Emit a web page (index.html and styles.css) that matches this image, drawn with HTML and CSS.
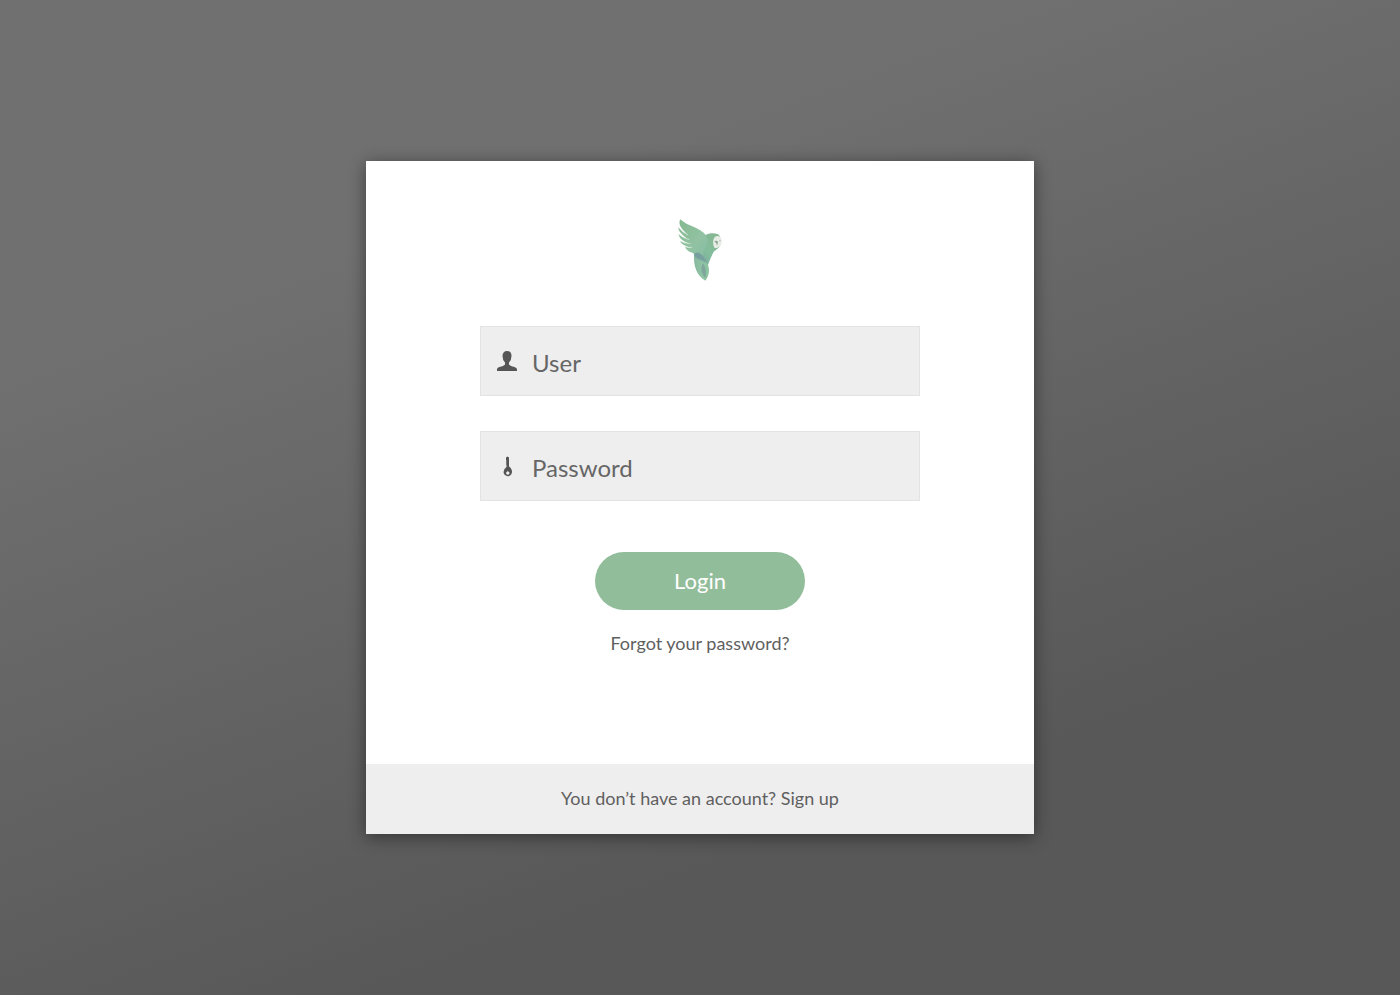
FILE: index.html
```html
<!DOCTYPE html>
<html lang="en">
<head>
<meta charset="utf-8">
<title>Login</title>
<link rel="stylesheet" href="styles.css">
</head>
<body class="page">
<main class="card">
  <form class="form">
    <svg class="logo" viewBox="24 22 132 186" aria-hidden="true">
      <defs>
        <linearGradient id="wing" x1="0" y1="0" x2="1" y2="1">
          <stop offset="0" stop-color="#84b98f"/>
          <stop offset=".6" stop-color="#92c2a2"/>
          <stop offset="1" stop-color="#86bda5"/>
        </linearGradient>
        <linearGradient id="body" x1="1" y1="0" x2="0" y2="1">
          <stop offset="0" stop-color="#86b68f"/>
          <stop offset=".55" stop-color="#84bd9d"/>
          <stop offset="1" stop-color="#769f9f"/>
        </linearGradient>
        <linearGradient id="tail" x1="0" y1="0" x2="1" y2="0">
          <stop offset="0" stop-color="#86b79d"/>
          <stop offset=".5" stop-color="#8fc3a3"/>
          <stop offset="1" stop-color="#8bc4a0"/>
        </linearGradient>
      </defs>
      <path fill="url(#tail)" d="M72 128C70 163 80 192 106 207C120 190 120 168 110 150C98 144 83 140 72 128Z"/>
      <path fill="#76949a" opacity=".6" d="M99 155C90 170 93 184 106 199C110 182 108 166 99 155Z"/>
      <path fill="url(#body)" d="M90 84C102 66 126 60 144 68C155 76 157 100 144 110L131 120C124 134 118 148 114 160C108 148 80 150 71 128C72 108 80 94 90 84Z"/>
      <path fill="url(#wing)" d="M31 23C47 39 69 43 85 53C101 62 110 70 113 84C112 104 100 112 99 134C90 120 82 120 76 126C60 122 49 116 45 105Q54 108 62 107C47 104 34 98 30 88Q42 94 55 95C39 88 27 80 26 68Q40 79 53 82C36 70 25 59 25 47Q37 62 52 68C34 53 23 37 31 23Z"/>
      <path fill="none" stroke="#dfeee4" stroke-width="2" d="M26 47Q37 63 54 70M26 68Q39 80 58 84M30 88Q44 96 62 96M45 105Q56 109 66 107"/>
      <path fill="#759a9f" opacity=".75" d="M76 124C90 120 102 134 110 152C100 142 84 142 74 132Z"/>
      <path fill="#e7ece5" d="M135 75C145 70 154 76 155 86C157 99 147 111 134 109C128 100 127 85 135 75Z"/>
      <path fill="#8aa690" d="M133 90C136 86 143 87 144 92L141 102L139 94Z"/>
      <circle cx="150" cy="87" r="2" fill="#a3b4a3"/>
    </svg>
    <label class="field">
      <svg class="field-icon" viewBox="0 0 20 20" aria-hidden="true">
        <path fill="#555" d="M10 0C13 0 14.500 2 14.500 5Q14.500 9 12 11.500V13.500C14 16 20 15.500 20 18.500V20H0V18.500C0 15.500 6 16 8 13.500V11.500Q5.500 9 5.500 5C5.500 2 7 0 10 0Z"/>
      </svg>
      <input class="input" type="text" placeholder="User" aria-label="User">
    </label>
    <label class="field">
      <svg class="field-icon" viewBox="0 0 20 20" aria-hidden="true">
        <path fill="#555" fill-rule="evenodd" d="M9 1.500L10.500 0.500L12 1.500V10.500Q15 12.500 15 16Q14.500 20 11 20.200Q7 20 6.500 16Q7 12.500 9.500 11V9L9 8L9.500 7L9 6L9.500 5L9 4ZM10.800 15L9.200 16.500A1.700 1.700 0 1 0 12.400 16.500Z"/>
      </svg>
      <input class="input" type="password" placeholder="Password" aria-label="Password">
    </label>
    <button class="login" type="submit">Login</button>
    <a class="link" href="#">Forgot your password?</a>
  </form>
  <footer class="footer"><a class="link" href="#">You don’t have an account? Sign up</a></footer>
</main>
</body>
</html>
```
FILE: styles.css
```css
* {
  box-sizing: border-box;
}

.page {
  display: flex;
  align-items: center;
  justify-content: center;
  min-height: 100vh;
  margin: 0;
  background: linear-gradient(160deg, #707070 25%, #585858 75%);
  color: #5f5f5f;
  font-family: Lato, "Liberation Sans", sans-serif;
  font-size: 18px;
  line-height: 24px;
}

.card {
  width: 100%;
  max-width: 668px;
  background: #fff;
  box-shadow: 0 3px 16px rgba(0, 0, 0, 0.45);
}

.form {
  display: flex;
  flex-direction: column;
  align-items: center;
  padding: 58px 24px 109px;
}

.logo {
  width: 44px;
  height: 62px;
  margin-bottom: 45px;
}

.field {
  display: flex;
  align-items: center;
  gap: 15px;
  width: 100%;
  max-width: 440px;
  height: 70px;
  margin-bottom: 35px;
  padding: 0 16px;
  border: 1px solid #e3e3e3;
  background: #eee;
}

.field-icon {
  flex: none;
  width: 20px;
  height: 20px;
  overflow: visible;
}

.input {
  flex: 1;
  min-width: 0;
  height: 100%;
  padding: 2px 0 0;
  border: 0;
  outline: 0;
  background: transparent;
  color: #5f5f5f;
  font: inherit;
  font-size: 24px;
}

.input::placeholder {
  color: #666;
  opacity: 1;
}

.login {
  width: 210px;
  height: 58px;
  margin: 16px 0 21px;
  padding: 0;
  border: 0;
  border-radius: 29px;
  background: #92bd9a;
  color: #fff;
  font: inherit;
  font-size: 22px;
  cursor: pointer;
}

.link {
  color: inherit;
  text-decoration: none;
}

.footer {
  padding: 22px 24px 24px;
  background: #eee;
  text-align: center;
}
```
